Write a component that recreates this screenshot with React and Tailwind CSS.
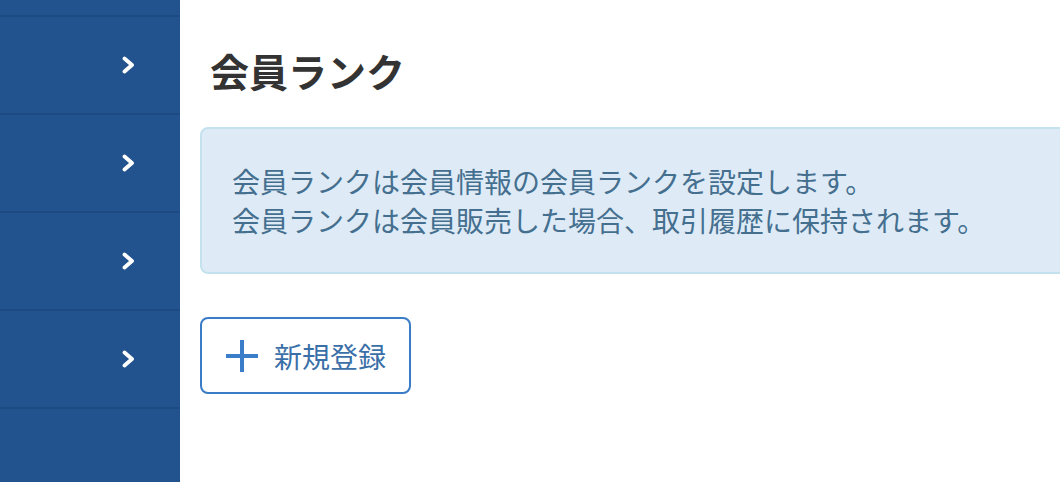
import React from "react";

const FONT = { fontFamily: '"Noto Sans CJK JP", "Noto Sans", sans-serif' };

function Chevron() {
  return (
    <svg width="15" height="18" viewBox="0 0 15 18" className="text-white">
      <path d="M3.5 2.5 L11 9 L3.5 15.5" fill="none" stroke="currentColor" strokeWidth="3.8" strokeLinecap="round" strokeLinejoin="round" />
    </svg>
  );
}

function SideItem() {
  return (
    <div className="h-[98px] border-b-2 border-[#1d4a80] flex items-center pl-[121px]">
      <Chevron />
    </div>
  );
}

export default function App() {
  return (
    <div className="flex w-full h-[482px] overflow-hidden bg-white" style={FONT}>
      <aside className="w-[180px] shrink-0 bg-[#23538e]">
        <div className="h-[17px] border-b-2 border-[#1d4a80]" />
        <SideItem />
        <SideItem />
        <SideItem />
        <SideItem />
      </aside>

      <main className="flex-1 pl-5 -mr-6">
        <h1 className="mt-[47px] ml-[10px] text-[39px] leading-[47px] font-bold text-[#333333]">
          会員ランク
        </h1>

        <div className="mt-[33px] h-[147px] rounded-lg border-2 border-[#c3e2ee] bg-[#deebf6] pl-[30px] pt-[33px] text-[28px] leading-[39px] text-[#456f8f]">
          <p>会員ランクは会員情報の会員ランクを設定します。</p>
          <p>会員ランクは会員販売した場合、取引履歴に保持されます。</p>
        </div>

        <button className="mt-[43px] h-[77px] w-[211px] rounded-lg border-2 border-[#3b7cc6] bg-white pl-[24px] flex items-center gap-4 text-[28px] text-[#3a6fa8]">
          <svg width="32" height="32" viewBox="0 0 32 32">
            <path d="M0 16 H32 M16 0 V32" stroke="#3a7dc8" strokeWidth="4" />
          </svg>
          <span>新規登録</span>
        </button>
      </main>
    </div>
  );
}
